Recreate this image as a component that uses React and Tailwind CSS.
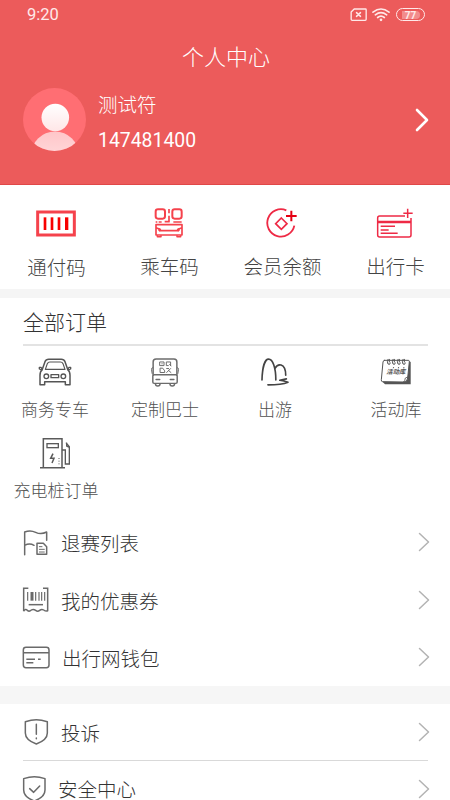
const Icon = ({ box, className, children }) => (
  <svg
    viewBox={box}
    className={className}
    fill="none"
    stroke="currentColor"
    strokeWidth="4.5"
    strokeLinecap="round"
    strokeLinejoin="round"
  >
    {children}
  </svg>
);

// --- quick actions ---
const PayCodeIcon = () => (
  <Icon box="109 58 120 81" className="w-10 h-[27px] text-[#f5424c]">
    <rect x="114" y="64" width="110" height="69" strokeWidth="9" strokeLinejoin="miter" />
    <g fill="#f80000" stroke="none">
      <rect x="132" y="80" width="8" height="38" />
      <rect x="153" y="80" width="8" height="38" />
      <rect x="174" y="80" width="8" height="38" />
      <rect x="196" y="80" width="10" height="38" />
    </g>
  </Icon>
);

const RideCodeIcon = () => (
  <Icon box="463 54 90 90" className="size-[30px] text-[#f5424c]">
    <rect x="468" y="58" width="28" height="28" rx="7" strokeWidth="6" />
    <rect x="518" y="58" width="28" height="28" rx="7" strokeWidth="6" />
    <g strokeLinecap="butt" strokeWidth="5">
      <path d="M508 57v13M508 77v18h-13M468 96h5M477 96h9M521 96h25" />
    </g>
    <path d="M469 104h78v31h-78zM469 113l10 4M547 113l-10 4M480 122h56" strokeWidth="5" />
    <circle cx="480" cy="119" r="4.5" fill="currentColor" stroke="none" />
    <circle cx="536" cy="119" r="4.5" fill="currentColor" stroke="none" />
    <path d="M473 137v3h11v-3M532 137v3h11v-3" />
  </Icon>
);

const BalanceIcon = () => (
  <Icon box="123 53 93 90" className="w-[31px] h-[30px] text-[#ee2a45]">
    <path d="M184 60A41 41 0 1 0 208 106" strokeWidth="5.5" strokeLinecap="butt" />
    <path d="M169 83l17 17-17 17-17-17z" strokeWidth="5" strokeLinejoin="miter" />
    <path d="M199 61v32M183 77h32" stroke="#e50012" strokeWidth="6" strokeLinecap="butt" />
  </Icon>
);

const TravelCardIcon = () => (
  <Icon box="453 53 114 93" className="w-[38px] h-[31px] text-[#ee2a45]">
    <path d="M540 77h-76q-6 0-6 6v51q0 6 6 6h88q6 0 6-6V83" strokeLinecap="butt" />
    <path d="M458 95h100" strokeWidth="8" strokeLinecap="butt" />
    <path d="M467 108h43M467 119h24M467 129h51" strokeLinecap="butt" />
    <path d="M548 55v28M535 69h28" strokeLinecap="butt" />
  </Icon>
);

// --- orders ---
const CarIcon = () => (
  <Icon box="114 172 102 84" className="w-[34px] h-[28px] text-[#555]">
    <path d="M127 206l8-23q3-7 11-7h38q8 0 11 7l8 23" />
    <path d="M136 206l6-17q2-5 8-5h31q6 0 8 5l6 17z" strokeWidth="3.5" />
    <path d="M127 206l-4-6h-5v5l7 3M203 206l4-6h5v5l-7 3" strokeWidth="4" />
    <path d="M127 207q-7 5-7 17v28h14v-9h62v9h14v-28q0-12-7-17" />
    <circle cx="139" cy="227" r="7" strokeWidth="4" />
    <circle cx="190" cy="227" r="7" strokeWidth="4" />
    <rect x="153" y="222" width="23" height="9" strokeWidth="4" />
  </Icon>
);

const BusIcon = () => (
  <Icon box="451 171 87 88" className="size-[29px] text-[#6c6c6c]">
    <path d="M457 223v-40q0-9 9-9h54q9 0 9 9v40" />
    <path d="M456 200q-5 1-4 6l2 12M530 200q5 1 4 6l-2 12" strokeWidth="3" />
    <rect x="456" y="222" width="74" height="26" rx="4" />
    <path d="M466 236h11M509 236h11M464 249q0 7 7 7t7-7M508 249q0 7 7 7t7-7" />
    <g strokeWidth="3">
      <rect x="478" y="183" width="12" height="11" />
      <path d="M484 188v1M510 194v-11h-13v11h6M507 190l4 5M478 203v12h14v-5l-5-7zM498 203h6M510 203l-12 12M504 209l7 6" />
    </g>
  </Icon>
);

const HillIcon = () => (
  <Icon box="106 170 88 90" className="w-[29px] h-[30px] text-[#444]">
    <path d="M109 239C110 205 117 176 129 176C142 176 151 203 151 239" strokeWidth="5" />
    <path d="M149 203C153 196 160 192 167 194C176 197 181 210 181 225" strokeWidth="5" />
    <path d="M183 236l-20 4q13 1 25 6q-19 8-61 8" strokeWidth="5" />
  </Icon>
);

const CalendarIcon = () => (
  <Icon box="466 174 96 84" className="w-[32px] h-[28px] text-[#555]">
    <path d="M550 181l8 5v67h-77l-8-8" fill="#555" stroke="none" />
    <path d="M479 181h72q3 0 3 4l-5 49q-1 12-12 12l-63-1q-5 0-4-6l5-53q1-5 4-5z" fill="#fff" strokeWidth="3" />
    <path d="M553 231q-6 0-11 3q0 8-6 12" strokeWidth="2.5" />
    <g strokeWidth="3">
      <path d="M490 178q-4 8 0 14q6 4 7-3M505 178q-4 8 0 14q6 4 7-3M520 178q-4 8 0 14q6 4 7-3M535 178q-4 8 0 14q6 4 7-3" />
      <path d="M494 178v8M509 178v8M524 178v8M539 178v8" />
      <path d="M506 203h1M521 203h1M537 203h1" />
    </g>
    <text
      x="485"
      y="223"
      fontSize="19"
      fontWeight="700"
      fontStyle="italic"
      fill="#555"
      stroke="none"
    >
      活动库
    </text>
  </Icon>
);

const ChargerIcon = () => (
  <Icon box="124 34 96 96" className="size-8 text-[#5a5a5a]">
    <g strokeLinecap="butt" strokeLinejoin="miter">
      <path d="M124 126h75M134 126V39h56v87" />
      <rect x="145" y="54" width="34" height="12" strokeWidth="4" />
      <path d="M190 73h10v42h12V63l-10-12M204 51v10l8 4" strokeWidth="4" />
      <path d="M163 84l-7 14h10l-6 14" />
      <path d="M181 97v22" strokeWidth="3" strokeDasharray="3 5" />
    </g>
  </Icon>
);

// --- list rows ---
const FlagIcon = () => (
  <Icon box="70 310 78 81" className="w-[26px] h-[27px] text-[#6a6a6a]">
    <path d="M75 387v-68q17-7 33 1t33-1v25M75 359q15-8 28 0" />
    <path d="M112 353h19l10 10v23h-29z" />
    <path d="M119 363h8M119 371h15M119 379h15" strokeWidth="3" />
  </Icon>
);

const CouponIcon = () => (
  <Icon box="67 64 84 78" className="w-7 h-[26px] text-[#6a6a6a]">
    <g strokeLinecap="butt" strokeLinejoin="miter">
      <path d="M86 68H72v69M130 68h14v69" />
      <path d="M72 136q6-8 11-2q6 5 12-1q6-4 13 1q6 5 12 0q6-5 12-1q5 4 12 3" />
      <path d="M84 79v26M118 79v26M126 79v26M135 79v26M108 79v26" strokeWidth="3.5" />
      <path d="M97 79v26" strokeWidth="9" />
      <path d="M87 117h43" />
    </g>
  </Icon>
);

const WalletIcon = () => (
  <Icon box="67 241 84 69" className="w-7 h-[23px] text-[#6a6a6a]">
    <rect x="71" y="245" width="77" height="61" rx="8" />
    <path d="M71 261h77M80 281h26M115 281h8M80 291h21" strokeLinecap="butt" />
  </Icon>
);

const ComplainIcon = () => (
  <Icon box="71 114 75 84" className="w-[25px] h-7 text-[#6a6a6a]">
    <path d="M108 119q15 0 33 6v34q0 21-33 33q-33-12-33-33v-34q18-6 33-6z" />
    <path d="M108 133v30M108 174v2" />
  </Icon>
);

const SafetyIcon = () => (
  <Icon box="66 286 75 84" className="-ml-[3px] w-[25px] h-7 text-[#6a6a6a]">
    <path d="M103 291q15 0 32 6v34q0 21-32 33q-32-12-32-33v-34q17-6 32-6z" />
    <path d="M89 327l12 11 18-19" />
  </Icon>
);

const Arrow = () => (
  <Icon box="0 0 12 20" className="ml-auto w-3 h-5 text-[#b3b3b3]">
    <path d="M1.5 1.5L10.5 10L1.5 18.5" strokeWidth="1.5" />
  </Icon>
);

const actions = [
  { label: "通付码", icon: PayCodeIcon, className: "mt-[17px]" },
  { label: "乘车码", icon: RideCodeIcon, className: "mt-4" },
  { label: "会员余额", icon: BalanceIcon, className: "mt-4" },
  { label: "出行卡", icon: TravelCardIcon, className: "mt-4" },
];

const orders = [
  { label: "商务专车", icon: CarIcon },
  { label: "定制巴士", icon: BusIcon },
  { label: "出游", icon: HillIcon },
  { label: "活动库", icon: CalendarIcon, className: "pl-3" },
  { label: "充电桩订单", icon: ChargerIcon, className: "pl-0.5" },
];

const Row = ({ icon: RowIcon, label, height = "h-[57.5px]", className = "ml-[11px] pt-1.5" }) => (
  <div className={`flex items-center pl-[22px] pr-5 ${height}`}>
    <div className="flex items-center justify-center w-7">
      <RowIcon />
    </div>
    <span className={`text-[19.5px] leading-4 text-[#333] ${className}`}>{label}</span>
    <Arrow />
  </div>
);

export default function App() {
  return (
    <div className="w-full h-screen overflow-hidden bg-white font-light font-['Roboto','Noto_Sans_CJK_SC',sans-serif]">
      {/* Header */}
      <header className="h-[185px] bg-[#ec5b5b] border-b border-[#e04848] text-white">
        <div className="flex items-center h-[29px] pl-[27px] pr-[25px]">
          <span className="pt-0.5 text-[16.5px] font-normal text-[#ffe9e9]">9:20</span>
          <div className="flex items-center ml-auto text-[#ffe9e9]">
            <Icon box="374 22 50 39" className="w-[17px] h-[13px]">
              <path d="M386 25h34q2 0 2 2v29q0 3-3 3h-39q-3 0-3-3V34z" strokeWidth="4" />
              <path d="M393 36l12 11M405 36l-12 11" />
            </Icon>
            <Icon box="440 21 54 41" className="ml-[5px] w-[18px] h-[14px]">
              <path d="M443 33q24-19 48 0M450 41q17-13 34 0M457 49q10-8 20 0" strokeWidth="5" />
              <circle cx="467" cy="56" r="4" fill="currentColor" stroke="none" />
            </Icon>
            <div className="flex items-center justify-center ml-[6px] w-[29px] h-[13px] border border-[#ffe9e9] rounded-full">
              <span className="w-[18px] h-[8px] rounded-r-sm bg-white/30 text-[10px] leading-[9px] font-bold text-center">
                77
              </span>
            </div>
          </div>
        </div>
        <h1 className="pl-0.5 mt-[13px] text-[22px] leading-8 text-center">个人中心</h1>
        <div className="flex items-center mt-[14px] h-[63px] pl-[23px] pr-[21px]">
          <svg viewBox="0 0 63 63" className="size-[63px]">
            <defs>
              <linearGradient id="head" x1="0" y1="0" x2="0" y2="1">
                <stop offset="0" stopColor="#fff" />
                <stop offset="1" stopColor="#ffe6e7" />
              </linearGradient>
              <linearGradient id="body" x1="0" y1="0" x2="0" y2="1">
                <stop offset="0" stopColor="#ffc6c9" />
                <stop offset="1" stopColor="#ffe9ea" />
              </linearGradient>
              <clipPath id="disc">
                <circle cx="31.5" cy="31.5" r="31.5" />
              </clipPath>
            </defs>
            <circle cx="31.5" cy="31.5" r="31.5" fill="#ff6e73" />
            <circle cx="32" cy="67.5" r="24" fill="url(#body)" clipPath="url(#disc)" />
            <circle cx="32.3" cy="29.5" r="13.8" fill="url(#head)" />
          </svg>
          <div className="flex flex-col ml-3 pt-[7px]">
            <span className="text-[19.5px] leading-8">测试符</span>
            <span className="mt-[3px] text-[19.4px] leading-8 font-normal">147481400</span>
          </div>
          <Icon box="0 0 14 24" className="ml-auto w-[14px] h-6">
            <path d="M2 2L12 12L2 22" strokeWidth="2.6" />
          </Icon>
        </div>
      </header>

      {/* Quick actions */}
      <div className="grid grid-cols-4 w-[452px] h-[104px] pt-[23px]">
        {actions.map(({ label, icon: ActionIcon, className }) => (
          <div key={label} className="flex flex-col items-center">
            <div className="flex items-center h-[30px] pr-[2px]">
              <ActionIcon />
            </div>
            <span className={`text-[19.5px] leading-7 text-[#444] ${className}`}>{label}</span>
          </div>
        ))}
      </div>
      <div className="h-[9px] bg-[#f5f5f5]" />

      {/* Orders */}
      <div className="h-[215.5px]">
        <div className="h-12 ml-[23px] mr-[22px] border-b-2 border-[#e3e3e3]">
          <h2 className="text-[21px] leading-[50px] text-[#333]">全部订单</h2>
        </div>
        <div className="grid grid-cols-[110px_110px_110px_120px] gap-y-[15px] pt-[10px]">
          {orders.map(({ label, icon: OrderIcon, className = "" }) => (
            <div key={label} className={`flex flex-col items-center ${className}`}>
              <div className="flex items-center h-8">
                <OrderIcon />
              </div>
              <span className="mt-[10px] text-[17px] leading-6 text-[#505050] whitespace-nowrap">
                {label}
              </span>
            </div>
          ))}
        </div>
      </div>

      <Row icon={FlagIcon} label="退赛列表" />
      <Row icon={CouponIcon} label="我的优惠券" />
      <Row icon={WalletIcon} label="出行网钱包" className="ml-[12px] pt-1.5" />
      <div className="h-[18px] bg-[#f6f6f6]" />
      <Row icon={ComplainIcon} label="投诉" height="h-14" />
      <div className="h-px ml-[23px] mr-[22px] bg-[#d9d9d9]" />
      <Row icon={SafetyIcon} label="安全中心" height="h-14" className="ml-[8px] pt-1" />
    </div>
  );
}
